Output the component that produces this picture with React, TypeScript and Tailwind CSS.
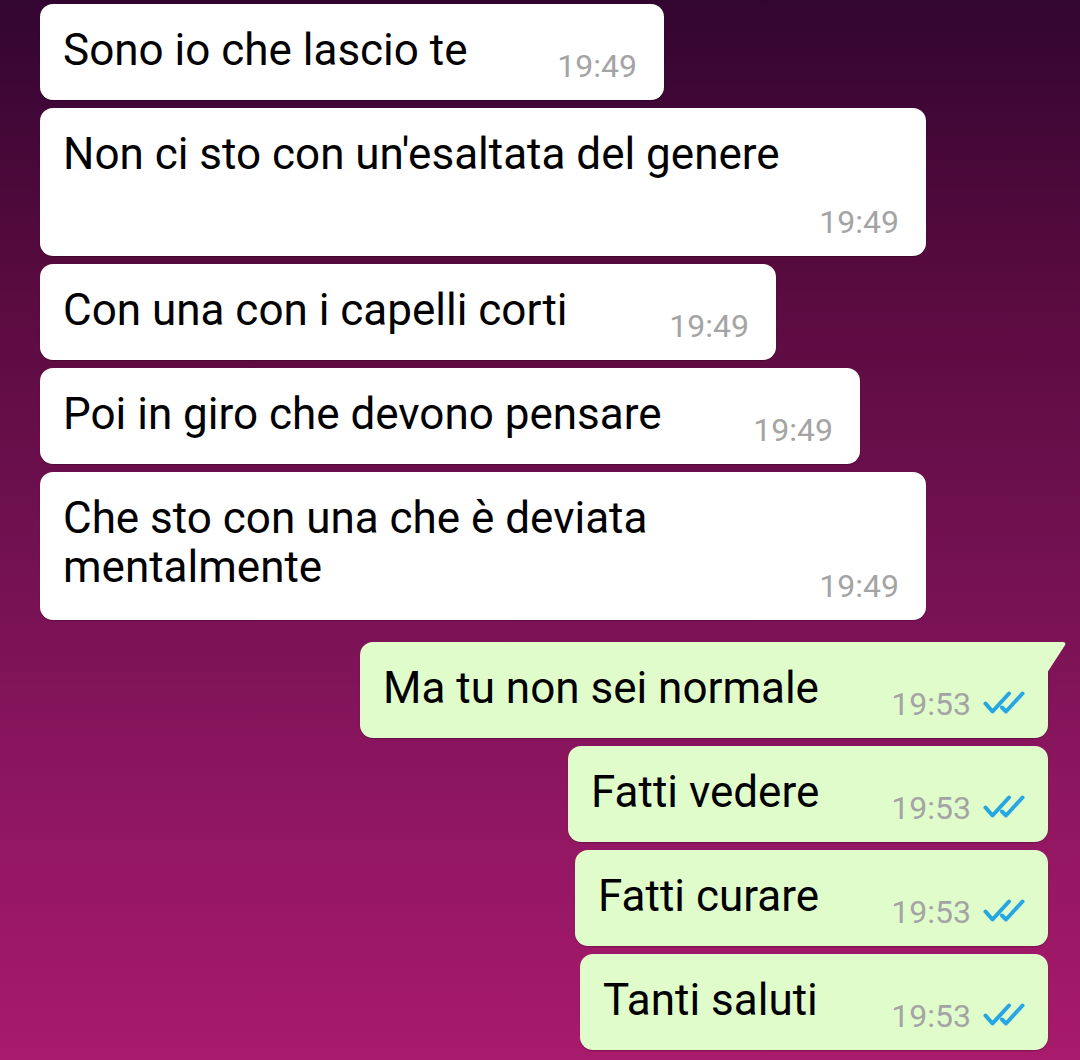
import React from "react";

type Msg = {
  text: string;
  time: string;
  out?: boolean;
  tail?: boolean;
  stacked?: boolean;
  textPad?: string;
  w: string;
};

const messages: Msg[] = [
  { text: "Sono io che lascio te", time: "19:49", w: "w-[624px]" },
  { text: "Non ci sto con un'esaltata del genere", time: "19:49", w: "w-[886px]", stacked: true },
  { text: "Con una con i capelli corti", time: "19:49", w: "w-[736px]" },
  { text: "Poi in giro che devono pensare", time: "19:49", w: "w-[820px]" },
  { text: "Che sto con una che è deviata mentalmente", time: "19:49", w: "w-[886px]", textPad: "pb-[15px]" },
  { text: "Ma tu non sei normale", time: "19:53", out: true, tail: true, w: "w-[688px]" },
  { text: "Fatti vedere", time: "19:53", out: true, w: "w-[480px]" },
  { text: "Fatti curare", time: "19:53", out: true, w: "w-[473px]" },
  { text: "Tanti saluti", time: "19:53", out: true, w: "w-[468px]" },
];

const Ticks = () => (
  <svg width="42" height="24" viewBox="0 0 42 24" className="ml-[12px] mb-[8px]">
    <path d="M2.5 12.5 L9.5 20.5 L26 2.5" fill="none" stroke="#27a6e4" strokeWidth="4" strokeLinecap="round" strokeLinejoin="round" />
    <path d="M19 16.5 L23 20.5 L39.5 2.5" fill="none" stroke="#27a6e4" strokeWidth="4" strokeLinecap="round" strokeLinejoin="round" />
  </svg>
);

const Time = ({ m }: { m: Msg }) => (
  <div className="flex items-end shrink-0 mb-[2px]">
    <span className="text-[32px] leading-[37px] text-[#a4a4a4]">{m.time}</span>
    {m.out && <Ticks />}
  </div>
);

const Bubble = ({ m }: { m: Msg }) => {
  return (
    <div
      className={`relative ${m.w} rounded-[13px] pt-[22px] pb-[13px] pl-[23px] shadow-[0_1px_1px_rgba(0,0,0,0.25)] ${
        m.out ? "self-end mr-[32px] bg-[#e1fccb] pr-[23px]" : "ml-[40px] bg-white pr-[27px]"
      } ${m.tail ? "rounded-tr-none" : ""}`}
    >
      {m.stacked ? (
        <div className="flex flex-col">
          <span className="text-[44px] leading-[49px]">{m.text}</span>
          <div className="self-end mt-[25px]">
            <Time m={m} />
          </div>
        </div>
      ) : (
        <div className="flex items-end justify-between gap-4">
          <span className={`text-[44px] leading-[49px] ${m.textPad ?? "pb-[12px]"}`}>{m.text}</span>
          <Time m={m} />
        </div>
      )}
      {m.tail && (
        <svg width="20" height="32" viewBox="0 0 20 32" className="absolute top-0 right-[-19px]">
          <path d="M0 0 H15.5 Q20 0 17.6 3.8 L0 31 Z" fill="#e1fccb" />
        </svg>
      )}
    </div>
  );
};

const App = () => {
  return (
    <div className="w-[1080px] h-[1060px] overflow-hidden bg-[linear-gradient(to_bottom,#320530_0%,#5a0b40_28%,#721151_52%,#8e1660_75%,#a81a6c_100%)] font-['Roboto',sans-serif] text-black">
      <div className="flex flex-col pt-[4px]">
        <div className="flex flex-col gap-[8px]">
          {messages.slice(0, 5).map((m, i) => (
            <Bubble key={i} m={m} />
          ))}
        </div>
        <div className="flex flex-col gap-[8px] mt-[22px]">
          {messages.slice(5).map((m, i) => (
            <Bubble key={i} m={m} />
          ))}
        </div>
      </div>
    </div>
  );
};

export default App;
